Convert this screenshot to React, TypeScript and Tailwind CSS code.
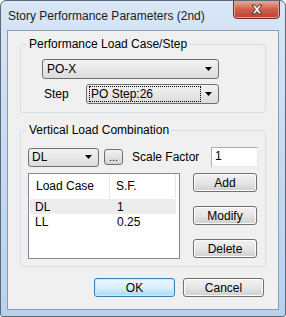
import React from "react";

const font = { fontFamily: '"Liberation Sans", Arial, sans-serif' };

function Arrow() {
  return (
    <svg width="7" height="4" viewBox="0 0 7 4" className="shrink-0">
      <path d="M0 0h7L3.5 4z" fill="#000" />
    </svg>
  );
}

function Combo({ value, width, focus }: { value: string; width: string; focus?: boolean }) {
  return (
    <div
      className={`${width} h-[20px] flex items-center justify-between pl-[3px] pr-[6px] border border-[#707070] rounded-[3px] bg-gradient-to-b from-[#f2f2f2] to-[#dcdcdc]`}
    >
      <span
        className={`leading-[14px] px-[1px] ${focus ? "outline outline-1 outline-dotted outline-black w-[110px]" : ""}`}
      >
        {value}
      </span>
      <Arrow />
    </div>
  );
}

function Btn({ label, width, primary }: { label: string; width: string; primary?: boolean }) {
  return (
    <button
      type="button"
      className={`${width} h-[19px] flex items-center justify-center rounded-[3px] border text-[12px] leading-none ${
        primary
          ? "border-[#3c7fb1] bg-gradient-to-b from-[#eaf6fd] via-[#d9f0fc] to-[#a7d9f5] shadow-[inset_0_0_0_1px_#c8ecfd]"
          : "border-[#707070] bg-gradient-to-b from-[#f2f2f2] via-[#e6e6e6] to-[#cfcfcf] shadow-[inset_0_0_0_1px_#fcfcfc]"
      }`}
    >
      {label}
    </button>
  );
}

export default function App() {
  return (
    <div
      style={font}
      className="w-[286px] h-[317px] text-[12px] text-black bg-gradient-to-b from-[#d8e6f7] via-[#c5daf2] to-[#b8d2ee] border border-[#5d6876] rounded-t-[6px] rounded-b-[3px] flex flex-col overflow-hidden"
    >
      {/* title bar */}
      <div className="h-[29px] flex items-start justify-between pl-[7px] pr-[5px]">
        <span className="mt-[7px] leading-[16px] text-[#1b1b1b]">Story Performance Parameters (2nd)</span>
        <div className="w-[47px] h-[19px] -mt-[1px] rounded-b-[4px] border border-[#6d2d2d] bg-gradient-to-b from-[#e9a99a] via-[#c9604b] to-[#c0402c] shadow-[inset_0_0_0_1px_#e8a08f] flex items-center justify-center">
          <svg width="14" height="11" viewBox="0 0 14 11">
            <path
              d="M2 1h3l2 2.5L9 1h3L8.6 5.5 12 10H9L7 7.5 5 10H2l3.4-4.5z"
              fill="#fff"
              stroke="#3b3b3b"
              strokeWidth="1"
              strokeLinejoin="round"
            />
          </svg>
        </div>
      </div>

      {/* client area */}
      <div className="mx-[6px] h-[280px] border border-[#8a9cb4] bg-[#f0f0f0] flex flex-col px-[12px] pt-[6px]">
        <fieldset className="border border-[#d5dfe5] rounded-[3px] p-0">
          <legend className="ml-[6px] px-[2px] leading-[14px]">Performance Load Case/Step</legend>
          <div className="mt-[8px] pl-[21px] pb-[8px] flex flex-col gap-[5px]">
            <Combo value="PO-X" width="w-[177px]" />
            <div className="flex items-center">
              <span className="w-[44px] pl-[2px]">Step</span>
              <Combo value="PO Step:26" width="w-[133px]" focus />
            </div>
          </div>
        </fieldset>

        <fieldset className="mt-[10px] border border-[#d5dfe5] rounded-[3px] p-0">
          <legend className="ml-[6px] px-[2px] leading-[14px]">Vertical Load Combination</legend>
          <div className="px-[7px] pb-[7px]">
            <div className="mt-[10px] flex items-center">
              <div className="w-[71px] h-[19px] flex items-center justify-between pl-[3px] pr-[6px] border border-[#707070] rounded-[3px] bg-gradient-to-b from-[#f2f2f2] to-[#dcdcdc]">
                <span>DL</span>
                <Arrow />
              </div>
              <div className="ml-[5px] w-[19px] h-[16px] rounded-[3px] border border-[#707070] bg-gradient-to-b from-[#f2f2f2] to-[#d4d4d4] flex items-end justify-center text-[11px] leading-[13px]">
                ...
              </div>
              <span className="ml-[9px]">Scale Factor</span>
              <div className="ml-auto w-[47px] h-[20px] bg-white border border-[#abadb3] border-r-[#e3e9ef] border-b-[#e3e9ef] pl-[3px] leading-[16px]">
                1
              </div>
            </div>

            <div className="mt-[6px] flex justify-between">
              <div className="w-[152px] h-[86px] bg-white border border-[#828790] flex flex-col">
                <div className="h-[25px] flex items-center border-b border-white">
                  <span className="w-[81px] pl-[7px] h-full flex items-center border-r border-[#e5e5e5]">
                    Load Case
                  </span>
                  <span className="w-[66px] pl-[6px] h-full flex items-center border-r border-[#e5e5e5]">S.F.</span>
                </div>
                <div className="mx-[1px] h-[15px] flex items-center bg-[#ececec] w-[146px]">
                  <span className="w-[81px] pl-[5px]">DL</span>
                  <span className="pl-[6px]">1</span>
                </div>
                <div className="mx-[1px] h-[15px] flex items-center">
                  <span className="w-[81px] pl-[5px]">LL</span>
                  <span className="pl-[6px]">0.25</span>
                </div>
              </div>
              <div className="flex flex-col gap-[14px] mr-[1px]">
                <Btn label="Add" width="w-[64px]" />
                <Btn label="Modify" width="w-[64px]" />
                <Btn label="Delete" width="w-[64px]" />
              </div>
            </div>
          </div>
        </fieldset>

        <div className="mt-[11px] flex justify-end gap-[8px] pr-[2px]">
          <Btn label="OK" width="w-[81px]" primary />
          <Btn label="Cancel" width="w-[81px]" />
        </div>
      </div>
    </div>
  );
}
